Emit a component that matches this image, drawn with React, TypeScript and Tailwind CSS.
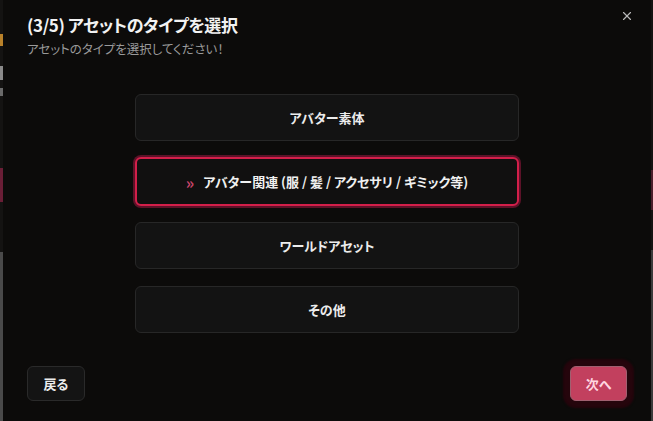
import { X } from 'lucide-react';

const OPTIONS = [
  { id: 'base', label: 'アバター素体' },
  { id: 'related', label: 'アバター関連 (服 / 髪 / アクセサリ / ギミック等)' },
  { id: 'world', label: 'ワールドアセット' },
  { id: 'other', label: 'その他' },
];

const font = { fontFamily: '"Noto Sans CJK JP", "Noto Sans", sans-serif', fontFeatureSettings: '"palt"' };

export default function App() {
  const selected = 'related';

  return (
    <div className="flex h-[421px] w-[653px] overflow-hidden bg-[#0a0909]" style={font}>
      {/* backdrop peeking on the left */}
      <div className="flex w-[3px] flex-col">
        <div className="h-[34px] bg-[#141312]" />
        <div className="h-[12px] bg-[#b8812a]" />
        <div className="h-[20px] bg-[#141312]" />
        <div className="h-[14px] bg-[#8a8a8a]" />
        <div className="h-[8px] bg-[#141312]" />
        <div className="h-[8px] bg-[#6a6a6a]" />
        <div className="h-[72px] bg-[#141312]" />
        <div className="h-[34px] bg-[#6a1e36]" />
        <div className="h-[50px] bg-[#141312]" />
        <div className="flex-1 bg-[#4a4a4a]" />
      </div>

      <div className="relative flex flex-1 flex-col bg-[#0c0b0a] px-6 pb-5 pt-[12px]">
        <button className="absolute right-[17px] top-[9px] text-[#b8b8b8]" type="button">
          <X className="h-[14px] w-[14px]" strokeWidth={2} />
        </button>

        <h1 className="text-[17px] font-bold leading-[26px] tracking-[-0.4px] text-[#f2f2f2]">
          (3/5) アセットのタイプを選択
        </h1>
        <p className="mt-[2px] text-[12.5px] leading-[18px] text-[#9a9a9a]">アセットのタイプを選択してください！</p>

        <div className="mx-auto mt-[36px] flex w-[384px] flex-col">
          {OPTIONS.map((o) =>
            o.id === selected ? (
              <button
                key={o.id}
                type="button"
                className="mt-4 flex h-[49px] items-center justify-center gap-[9px] rounded-md border-2 border-[#d31f4a] bg-[#111010] text-[13px] font-bold text-[#f0f0f0] shadow-[0_0_0_2px_#5c1228]"
              >
                <span className="text-[16px] leading-none text-[#c9446a]">»</span>
                {o.label}
              </button>
            ) : (
              <button
                key={o.id}
                type="button"
                className="mt-4 flex h-[47px] items-center justify-center rounded-md border border-[#272727] bg-[#131313] text-[13px] font-bold text-[#ececec] first:mt-0 last:mt-[17px]"
              >
                {o.label}
              </button>
            )
          )}
        </div>

        <div className="mt-auto flex items-center justify-between">
          <button
            type="button"
            className="h-[35px] w-[58px] rounded-md border border-[#2a2a2a] bg-[#141414] text-[13px] font-bold text-[#ececec]"
          >
            戻る
          </button>
          <button
            type="button"
            className="h-[35px] w-[57px] rounded-md border border-[#a06070] bg-[#c2405e] text-[13px] font-bold text-[#ffd6e0] shadow-[0_0_2px_7px_#25050c]"
          >
            次へ
          </button>
        </div>
      </div>

      <div className="flex w-[2px] flex-col">
        <div className="h-[170px] bg-[#141312]" />
        <div className="h-[40px] bg-[#4a1e2a]" />
        <div className="h-[40px] bg-[#141312]" />
        <div className="flex-1 bg-[#3a3a3a]" />
      </div>
    </div>
  );
}
